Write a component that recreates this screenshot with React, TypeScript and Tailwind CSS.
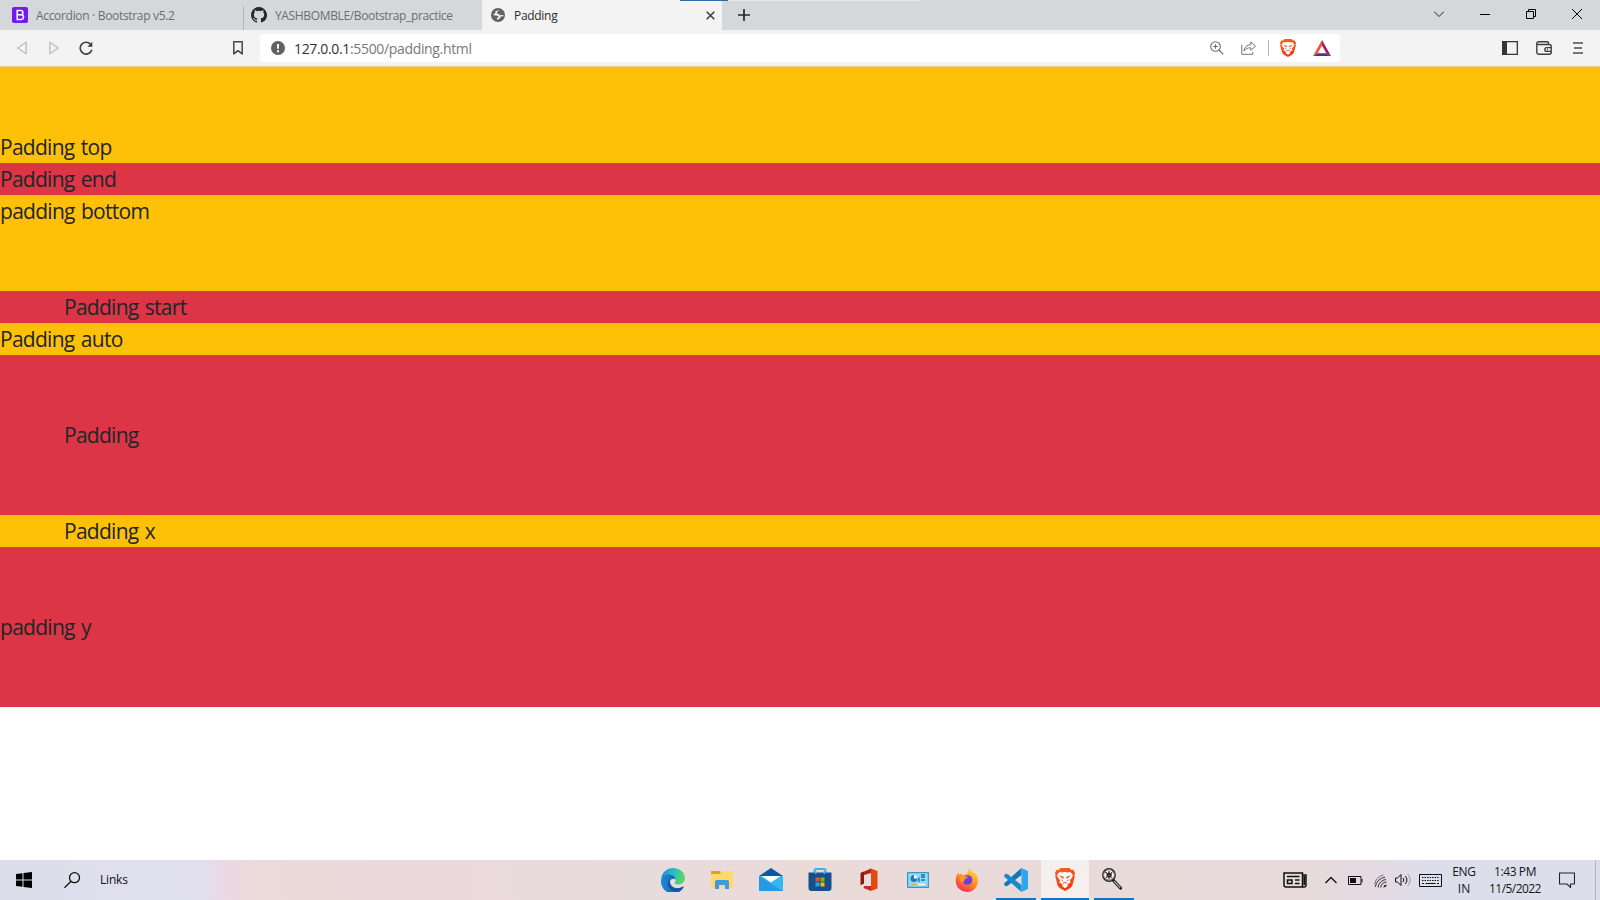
import type { ReactNode } from "react";

const FONT = "font-['Open_Sans','Noto_Sans',sans-serif]";

function Icon({ w, h, className = "", children }: { w: number; h: number; className?: string; children: ReactNode }) {
  return (
    <svg width={w} height={h} viewBox={`0 0 ${w} ${h}`} fill="none" className={`shrink-0 ${className}`}>
      {children}
    </svg>
  );
}

function BraveIcon({ w, h, id }: { w: number; h: number; id: string }) {
  return (
    <svg width={w} height={h} viewBox="0 0 20 23" className="shrink-0" preserveAspectRatio="none">
      <defs>
        <linearGradient id={id} x1="0" x2="0.3" y1="0" y2="1">
          <stop offset="0" stopColor="#f26522" />
          <stop offset="1" stopColor="#f5390f" />
        </linearGradient>
      </defs>
      <path d="M5.500 0h9l2 2 2-.2L20 5l-.6 2 .3 1.500-2.400 9.200-2 2.300L10 23l-5.300-3-2-2.300L.3 8.500.600 7 0 5l1.500-3.200 2 .2z" fill={`url(#${id})`} />
      <path d="M4.600 3.900 7.200 4.500 10 3.900l2.800.6 2.600-.6L18 7.300l-.8 2-2.200 3 .5 2.200-2.700 1.800-.6.8.8 1L10 20.200l-3-2.100.8-1-.6-.8-2.700-1.800.5-2.200-2.200-3-.8-2z" fill="#fff" />
      <path d="m4.600 7.700 3.900 1.400-.4 1.500zM15.400 7.700l-3.900 1.400.4 1.500z" fill="#f4481a" stroke="#f4481a" strokeWidth=".5" />
      <path d="m6.300 11.800 2 1.600M13.700 11.800l-2 1.600M7.800 15.400l2.200-1 2.200 1" fill="none" stroke="#f4481a" strokeWidth=".9" />
    </svg>
  );
}

function TabStrip() {
  return (
    <div className="flex h-[30px] w-full bg-[#d4d8db]">
      <div className="flex h-[30px] w-[243px] items-center pl-3">
        <Icon w={16} h={16}>
          <rect width="16" height="16" rx="2" fill="#7519f0" />
          <path d="M5.200 3.600h3.600a2.100 2.100 0 0 1 0 4.200H5.200zm0 4.200h4a2.300 2.300 0 0 1 0 4.600h-4z" stroke="#fff" strokeWidth="1.500" />
        </Icon>
        <span className="ml-2 whitespace-nowrap pt-px text-[12px] leading-[16px] tracking-[-0.32px] text-[#6a6e72]">Accordion · Bootstrap v5.2</span>
      </div>
      <div className="mt-[7px] h-[23px] w-px bg-[#b0b4b7]" />
      <div className="flex h-[30px] w-[238px] items-center pl-[7px]">
        <svg width="16" height="16" viewBox="0 0 16 16" fill="#24292f" className="shrink-0">
          <path d="M8 0C3.580 0 0 3.580 0 8c0 3.540 2.290 6.530 5.470 7.590.4.070.55-.17.55-.38 0-.19-.01-.82-.01-1.490-2.010.37-2.530-.49-2.690-.94-.09-.23-.48-.94-.82-1.130-.28-.15-.68-.52-.01-.53.63-.01 1.080.58 1.230.82.72 1.210 1.870.87 2.330.66.07-.52.28-.87.51-1.070-1.780-.2-3.640-.89-3.640-3.950 0-.87.31-1.590.82-2.150-.08-.2-.36-1.020.08-2.120 0 0 .67-.21 2.200.82a7.600 7.600 0 0 1 4 0c1.530-1.040 2.200-.82 2.200-.82.44 1.100.16 1.920.08 2.120.51.56.82 1.270.82 2.150 0 3.070-1.870 3.750-3.650 3.950.29.25.54.73.54 1.480 0 1.070-.01 1.930-.01 2.200 0 .21.15.46.55.38A8 8 0 0 0 8 0z" />
        </svg>
        <span className="ml-2 whitespace-nowrap pt-px text-[12px] leading-[16px] tracking-[-0.35px] text-[#6a6e72]">YASHBOMBLE/Bootstrap_practice</span>
      </div>
      <div className="flex h-[30px] w-[240px] items-center bg-[#f3f3f3] pl-[9px] pr-[7px]">
        <Icon w={14} h={14}>
          <circle cx="7" cy="7" r="7" fill="#5f6368" />
          <path d="M8.800 1.800 6.500 3.600 5.800 5.400l2 .6 1 1.200 3.500-.3.100 1.300-2.600.4-1 2-2.600 1.500-.2-1.800 1.600-1.200-.8-1.400-2.900-.2L1.700 6l2.300-.2.600-2.500z" fill="#f3f3f3" />
        </Icon>
        <span className="ml-[9px] flex-1 pt-px text-[12px] leading-[16px] tracking-[-0.3px] text-[#2b2e31]">Padding</span>
        <Icon w={9} h={9}>
          <path d="m.7.7 7.600 7.600m0-7.600L.7 8.300" stroke="#3a3c3e" strokeWidth="1.500" />
        </Icon>
      </div>
      <div className="flex h-[30px] items-center pl-4">
        <Icon w={12} h={12}>
          <path d="M6 0v12M0 6h12" stroke="#252729" strokeWidth="1.700" />
        </Icon>
      </div>
      <div className="ml-auto flex h-[28px] items-center gap-9 pr-[18px]">
        <Icon w={10} h={10}>
          <path d="m0 2.500 5 5 5-5" stroke="#202124" />
        </Icon>
        <Icon w={10} h={10}>
          <path d="M0 5.500h10" stroke="#000" />
        </Icon>
        <Icon w={10} h={10}>
          <path d="M.5 2.500h7v7h-7zM2.500 2.500v-2h7v7h-2" stroke="#000" />
        </Icon>
        <Icon w={10} h={10}>
          <path d="m0 0 10 10M10 0 0 10" stroke="#000" />
        </Icon>
      </div>
      <div className="absolute left-[680px] top-0 h-px w-12 bg-[#2d6da3]" />
      <div className="absolute left-[728px] top-0 h-px w-[192px] bg-[#e6e8ea]" />
    </div>
  );
}

function Toolbar() {
  return (
    <div className="flex h-[36px] w-full items-center bg-[#f3f3f3]">
      <Icon w={12} h={14} className="ml-4">
        <path d="M10.200 1.300v11.400L1.600 7z" stroke="#bcbcbc" strokeWidth="1.300" strokeLinejoin="round" />
      </Icon>
      <Icon w={12} h={14} className="ml-5">
        <path d="M1.800 1.300v11.400L10.400 7z" stroke="#bcbcbc" strokeWidth="1.300" strokeLinejoin="round" />
      </Icon>
      <Icon w={14} h={14} className="ml-[19px]">
        <path d="M11.500 3.200A5.900 5.900 0 1 0 12.800 8.800" stroke="#3c3e40" strokeWidth="1.600" />
        <path d="M13.300.8v4.900H8.400z" fill="#3c3e40" />
      </Icon>
      <Icon w={10} h={14} className="ml-[140px]">
        <path d="M.8.8h8.400v12.100L5 9.700.8 12.900z" stroke="#444649" strokeWidth="1.500" strokeLinejoin="round" />
      </Icon>
      <div className="ml-[17px] flex h-[28px] w-[1080px] items-center rounded bg-white pl-[11px] pr-[9px]">
        <Icon w={14} h={14}>
          <circle cx="7" cy="7" r="7" fill="#5f6368" />
          <path d="M7 3v4.800M7 9.300v1.900" stroke="#fff" strokeWidth="1.900" />
        </Icon>
        <span className="ml-[9px] flex-1 pt-px text-[14px] leading-[18px] tracking-[-0.34px] text-[#77797b]">
          <span className="text-[#303234]">127.0.0.1</span>:5500/padding.html
        </span>
        <Icon w={14} h={14}>
          <circle cx="5.500" cy="5.500" r="4.800" stroke="#6b6e71" strokeWidth="1.100" />
          <path d="m9 9 4.300 4.300M5.500 3.200v4.600M3.200 5.500h4.600" stroke="#6b6e71" strokeWidth="1.200" />
        </Icon>
        <Icon w={16} h={14} className="ml-[17px]">
          <path d="M.8 3.800v9.500h11v-2.500M9.800.9l4.800 4.300-4.800 4.100V6.800C6.800 6.700 4.600 7.600 3 10c.3-3.700 2.700-6 6.800-6.500z" stroke="#727578" />
        </Icon>
        <div className="ml-[11px] mr-[11px] h-4 w-px bg-[#b4b6b8]" />
        <BraveIcon w={16} h={18} id="brave-shield" />
        <svg width="18" height="16" viewBox="0 0 18 16" className="ml-[17px] shrink-0">
          <path d="M9 0 0 16l4.700-2.800L9 5.500z" fill="#fa5032" />
          <path d="m9 0 9 16-4.700-2.800L9 5.500z" fill="#9e1f63" />
          <path d="M0 16h18l-4.700-2.800H4.700z" fill="#5f2d91" />
        </svg>
      </div>
      <Icon w={16} h={14} className="ml-[162px]">
        <path d="M.7.7h14.600v12.600H.7z" stroke="#333538" strokeWidth="1.300" />
        <path d="M0 0h5v14H0z" fill="#333538" />
      </Icon>
      <Icon w={16} h={14} className="ml-[18px]">
        <path d="M12.500 3.500V1.900A1.200 1.200 0 0 0 11.300.7H2.400A1.700 1.700 0 0 0 .8 2.400v8.900a2 2 0 0 0 2 2h10.400a2 2 0 0 0 2-2V5.500a2 2 0 0 0-2-2H2.400A1.600 1.600 0 0 1 .8 2M15.200 6.600h-4.500a1.900 1.900 0 0 0 0 3.800h4.500M11 8.500h1" stroke="#3c3e40" strokeWidth="1.400" />
      </Icon>
      <Icon w={10} h={12} className="ml-[21px]">
        <path d="M0 1h10M1 6h8M0 11h10" stroke="#4a4c4e" strokeWidth="1.600" />
      </Icon>
    </div>
  );
}

function Page() {
  return (
    <main className="h-[793px] bg-white text-[21px] leading-[32px] tracking-[-0.72px] text-[#212529] [word-spacing:1.5px]">
      <div className="bg-[#ffc107] pt-16"><p>Padding top</p></div>
      <div className="bg-[#dc3545] pr-16"><p>Padding end</p></div>
      <div className="bg-[#ffc107] pb-16"><p>padding bottom</p></div>
      <div className="bg-[#dc3545] pl-16"><p>Padding start</p></div>
      <div className="bg-[#ffc107]"><p>Padding auto</p></div>
      <div className="bg-[#dc3545] p-16"><p>Padding</p></div>
      <div className="bg-[#ffc107] px-16"><p>Padding x</p></div>
      <div className="bg-[#dc3545] py-16"><p>padding y</p></div>
    </main>
  );
}

function EdgeIcon() {
  return (
    <svg width="24" height="24" viewBox="0 0 24 24">
      <defs>
        <linearGradient id="edge-top" x1="0" x2="1" y1=".3" y2=".5">
          <stop offset="0" stopColor="#1b8fd8" /><stop offset=".5" stopColor="#27bfc4" /><stop offset="1" stopColor="#62d957" />
        </linearGradient>
        <linearGradient id="edge-low" x1="0" x2="1"><stop offset="0" stopColor="#1b8ddc" /><stop offset="1" stopColor="#114a8b" /></linearGradient>
      </defs>
      <path d="M.2 10.500C1 4.400 6 0 12 0c6.800 0 12 4.600 12 10.200 0 3.700-2.900 6.300-6.500 6.300-2.500 0-3.800-.7-3.800-1.500 0-.6 1-1 1-3 0-2.600-2.700-5-6.500-5C4 7 1.200 8.500.2 10.500z" fill="url(#edge-top)" />
      <path d="M.1 12C.3 8.300 4 6.500 7.700 6.500c4.400 0 7 2.800 7 5.300-1-1.600-4.700-1.500-5.700 1.400-1.300 4 3 7.300 7.500 7 2.500-.1 4.300-1 5.500-1.700.6-.3 1 .2.6.7A12 12 0 0 1 .1 12z" fill="url(#edge-low)" />
      <path d="M9.500 10.600c-3.700 2.500-4 9.900 3.800 13.300A12 12 0 0 0 22.600 19c-4.500 2.500-10.300 1.400-12.600-2.100-1.500-2.300-1.300-4.700-.5-6.300z" fill="#17579e" />
    </svg>
  );
}

function AppIcons() {
  const cell = "flex h-10 w-[49px] items-center justify-center";
  const open = "flex h-10 w-[40px] flex-col items-center justify-end border-b-2 border-[#1474c4] pb-[6px]";
  return (
    <div className="flex">
      <div className={cell}><EdgeIcon /></div>
      <div className={cell}>
        <Icon w={22} h={20}>
          <path d="M0 2.500h10l1-1h11V18H0z" fill="#ffda6b" />
          <path d="M0 1h9.500v3H0z" fill="#d9a22a" />
          <path d="M4 19v-7.500A1.500 1.500 0 0 1 5.500 10h11a1.500 1.500 0 0 1 1.500 1.500V19h-4v-4H8v4z" fill="#3c9bdc" />
        </Icon>
      </div>
      <div className={cell}>
        <Icon w={24} h={24}>
          <path d="M12 0 24 8H0z" fill="#0a59a8" />
          <path d="M0 8h24v15H0z" fill="#35b7f1" />
          <path d="m0 23 12-8 12 8z" fill="#48c0f3" />
          <path d="m0 8 24 15H0z" fill="#249be4" />
          <path d="M2.500 8h19L12 14.500z" fill="#fff" />
        </Icon>
      </div>
      <div className={cell}>
        <Icon w={24} h={24}>
          <path d="M6.500 6V2.300A1.300 1.300 0 0 1 7.800 1h8.400a1.300 1.300 0 0 1 1.300 1.300V6" stroke="#38b5ea" strokeWidth="2" />
          <path d="M.5 4.500h23V20a3 3 0 0 1-3 3h-17a3 3 0 0 1-3-3z" fill="#174f8d" />
          <path d="M6.500 3h2v3h-2zM15.500 3h2v3h-2z" fill="#38b5ea" />
          <path d="M7.500 9.500h4v4h-4z" fill="#f25022" /><path d="M12.500 9.500h4v4h-4z" fill="#7fba00" />
          <path d="M7.500 14.500h4v4h-4z" fill="#24a5ef" /><path d="M12.500 14.500h4v4h-4z" fill="#ffb900" />
        </Icon>
      </div>
      <div className={cell}>
        <Icon w={18} h={24}>
          <path d="M11 .5 17.500 3v17.500L11 23z" fill="#e44a10" />
          <path d="M11 .5.700 5v12L4 15.500V7l7-2z" fill="#b52217" />
          <path d="M4 18h7v5L3.500 20z" fill="#c5282f" /><path d="M.7 5 4 3.600v12L.7 17z" fill="#8f1a14" />
        </Icon>
      </div>
      <div className={cell}>
        <Icon w={22} h={16}>
          <path d="M.5.500h21v15H.5z" fill="#6fcdf4" stroke="#4c8fb5" />
          <path d="M2 2h18v12H2z" fill="#8edcf9" />
          <circle cx="7" cy="6.500" r="3.500" fill="#1d78bf" /><path d="M7 6.500V3a3.500 3.500 0 0 1 3.500 3.500z" fill="#fff" />
          <path d="M14 5h4M14 8h4M12 10V5.500M14 3h4" stroke="#216fa5" strokeWidth="1.300" />
          <path d="M4 12.500h5" stroke="#f0ae24" strokeWidth="1.500" /><path d="M11 12.500h7" stroke="#fff" strokeWidth="1.300" />
        </Icon>
      </div>
      <div className={cell}>
        <svg width="24" height="24" viewBox="0 0 24 24">
          <defs>
            <linearGradient id="fox" x1=".8" y1="0" x2=".2" y2="1"><stop offset="0" stopColor="#ffe23e" /><stop offset=".5" stopColor="#ff8a1f" /><stop offset="1" stopColor="#f2245f" /></linearGradient>
          </defs>
          <path d="M3.500 4.500 4 7l2-1.500L8 7l4-1c1.500-2 1.300-4 2.500-6 1 3 3 3.500 5 6l.3-1.500c2 2.200 3.500 5 3.200 8.500A11 11 0 0 1 12 24 11.200 11.200 0 0 1 .7 13C.5 9.500 2 6.500 3.500 4.500z" fill="url(#fox)" />
          <circle cx="12.500" cy="12" r="4.800" fill="#6d3fd8" />
          <path d="M4 8c2-1.500 4-1 5 .3l4 .5c0 1.500-2.500 1.400-3 2.500-.3 1.500-2 2-2.500 4L5 13z" fill="#ff9b20" />
        </svg>
      </div>
      <div className="flex h-10 w-[50px] items-center pl-[5px]">
        <div className={open}>
          <Icon w={24} h={24}>
            <path d="M17.500 0v7L4 17.500 2 18.500.3 17 0 15.500z" fill="#1079bd" />
            <path d="M17.500 24v-7L4 6.500 2 5.500.3 7 0 8.500z" fill="#1a8ad0" />
            <path d="m17.500 0 6.500 3v18l-6.500 3z" fill="#2ba8ef" />
          </Icon>
        </div>
      </div>
      <div className="flex h-10 w-12 justify-center border-b-2 border-[#1474c4] bg-[#f5efee] pt-2">
        <BraveIcon w={20} h={23} id="brave-task" />
      </div>
      <div className="ml-[5px] flex h-10 w-10 justify-center border-b-2 border-[#1474c4] pr-1 pt-2">
        <Icon w={20} h={22}>
          <path d="m11.500 12.500 7 7.500" stroke="#171717" strokeWidth="3.200" strokeLinecap="round" />
          <path d="m12 13 6.300 6.700" stroke="#aaa" strokeWidth="1.300" />
          <circle cx="7" cy="7" r="6" fill="#f7f5f4" stroke="#222" strokeWidth="1.800" />
          <circle cx="7" cy="7" r="5.400" stroke="#999" strokeWidth=".9" />
          <path d="m3 4 2 1M10.500 4l-1.500 1M3.500 10l2-1M10 10.500 8.500 9M7 3v2M7 9v2.500" stroke="#2b1617" />
          <path d="M4.500 5.500 7 4.500l2.700 1v3L7 9.500l-2.500-1z" fill="#2b1617" /><path d="m5.500 8 1.500-2L9 8z" fill="#d0303a" />
        </Icon>
      </div>
    </div>
  );
}

function Tray() {
  return (
    <div className="ml-auto flex h-10 items-center text-[12px] leading-[17px] text-[#161616]">
      <Icon w={24} h={16}>
        <path d="M1 1h18.500v14H3a2 2 0 0 1-2-2zM19.500 3H23v10a2 2 0 0 1-2 2H3M4 4.500h12.500M12 8h4.500M12 11.500h4.500M4.500 8h4.500v3.500H4.500zM21.300 4v9" stroke="#111" strokeWidth="1.500" />
      </Icon>
      <Icon w={12} h={8} className="ml-[18px]"><path d="m.5 7 5.500-5.500L11.500 7" stroke="#111" strokeWidth="1.300" /></Icon>
      <Icon w={15} h={9} className="ml-[11px] mt-px"><path d="M.5.500h12.500v8H.5zM14 3v3.500" stroke="#111" /><path d="M2 2h6v5H2z" fill="#111" /></Icon>
      <Icon w={14} h={14} className="ml-[11px] mt-px">
        <path d="M4 13.500A9 9 0 0 1 12 5.500M6.700 13.500A6.500 6.500 0 0 1 12.500 8M1.300 13A12 12 0 0 1 11 3.200" stroke="#333" />
        <path d="M.5 10.500A12 12 0 0 1 9.500 1" stroke="#777" />
        <path d="M9.300 13.500a3.500 3.500 0 0 1 3-3v2z" fill="#111" />
      </Icon>
      <Icon w={17} h={14} className="ml-[7px]">
        <path d="M.5 5h2l3.500-3.500v11L2.500 9h-2zM8 5a3 3 0 0 1 0 4M10.200 3a5.500 5.500 0 0 1 0 8" stroke="#111" /><path d="M12.700 1.200a8 8 0 0 1 0 11.600" stroke="#999" />
      </Icon>
      <Icon w={23} h={13} className="ml-[7px]">
        <path d="M.5.500h22v12H.5z" stroke="#111" />
        <path d="M3 3.500h17M3 6.500h17" stroke="#111" strokeDasharray="1.500 1" /><path d="M3 9.500h2m1.500 0h10m1.500 0h2" stroke="#111" />
      </Icon>
      <div className="ml-[10px] flex w-6 flex-col items-center"><span className="tracking-[-0.3px]">ENG</span><span>IN</span></div>
      <div className="ml-[11px] flex w-[56px] flex-col items-center whitespace-nowrap"><span className="tracking-[-0.4px]">1:43 PM</span><span className="tracking-[-0.55px]">11/5/2022</span></div>
      <Icon w={16} h={16} className="ml-[16px]"><path d="M.5 1h15v11h-4v3.500L8 12H.5z" stroke="#222" strokeWidth="1.100" /></Icon>
      <div className="ml-5 mr-1 h-10 w-px bg-[#b2b3bf]" />
    </div>
  );
}

function Taskbar() {
  return (
    <div className="flex h-10 w-full bg-[linear-gradient(90deg,#dcdeeb_0px,#e1dfee_205px,#ead9e6_222px,#eddadb_250px,#e8dbdc_640px,#eadbd9_800px,#e8dada_1290px,#e5dae1_1370px,#dddeec_1430px,#dcdeec_1600px)]">
      <div className="flex w-[648px] items-center pl-4">
        <Icon w={16} h={16}><path d="m0 2 6.500-.8v6.300H0zM7.500 1 16 0v7.500H7.500zM0 8.500h6.500v6.300L0 14zM7.500 8.500H16V16l-8.500-1z" fill="#000" /></Icon>
        <Icon w={17} h={16} className="ml-8"><circle cx="10.500" cy="5.700" r="5" stroke="#111" strokeWidth="1.300" /><path d="M7 9.300.5 15.800" stroke="#111" strokeWidth="1.300" /></Icon>
        <span className="ml-[19px] text-[12px] leading-[16px] tracking-[-0.2px] text-[#111]">Links</span>
      </div>
      <AppIcons />
      <Tray />
    </div>
  );
}

export default function App() {
  return (
    <div className={`relative flex h-[900px] w-[1600px] flex-col overflow-hidden ${FONT}`}>
      <TabStrip />
      <Toolbar />
      <div className="h-px bg-[#e6ce8c]" />
      <Page />
      <Taskbar />
    </div>
  );
}
